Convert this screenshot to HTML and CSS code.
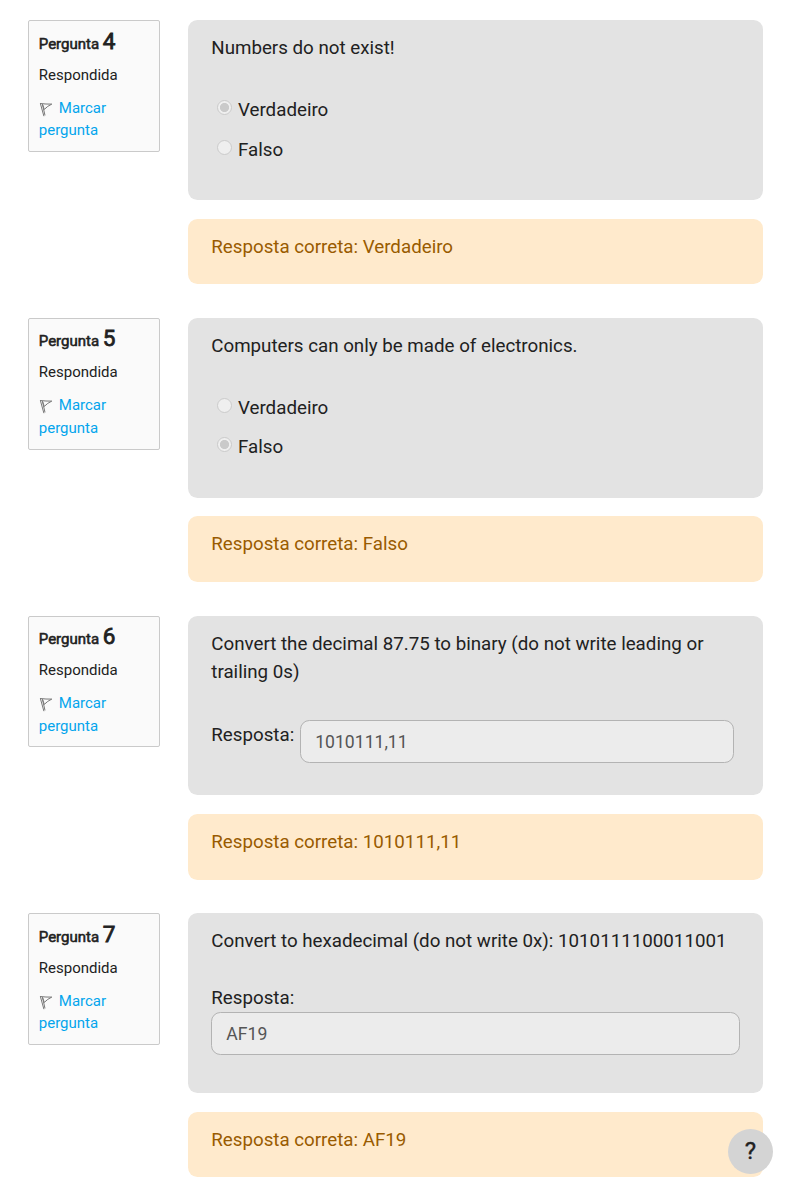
FILE: index.html
```html
<!DOCTYPE html>
<html lang="pt">
<head>
<meta charset="utf-8">
<title>Perguntas</title>
<link rel="stylesheet" href="styles.css">
</head>
<body>
<svg class="defs" aria-hidden="true">
  <symbol id="flag" viewBox="0 0 15 15"><path d="M1.4 1.6 4.9 14.2M3.4 2.2 6 13.4M1 1.5Q7 2.2 12.8 2.1Q8.5 4 5.3 7.4L3.5 2.3" fill="none" stroke="#777" stroke-width="1"/></symbol>
</svg>
<main class="quiz">
  <section class="question">
    <aside class="info">
      <h3 class="number">Pergunta <span class="digit">4</span></h3>
      <div class="state">Respondida</div>
      <a class="mark"><svg class="flag"><use href="#flag"/></svg>Marcar pergunta</a>
    </aside>
    <div class="content">
      <div class="formulation">
        <p class="text">Numbers do not exist!</p>
        <div class="options">
          <label class="option"><span class="radio checked"></span>Verdadeiro</label>
          <label class="option"><span class="radio"></span>Falso</label>
        </div>
      </div>
      <div class="outcome">Resposta correta: Verdadeiro</div>
    </div>
  </section>
  <section class="question">
    <aside class="info">
      <h3 class="number">Pergunta <span class="digit">5</span></h3>
      <div class="state">Respondida</div>
      <a class="mark"><svg class="flag"><use href="#flag"/></svg>Marcar pergunta</a>
    </aside>
    <div class="content">
      <div class="formulation">
        <p class="text">Computers can only be made of electronics.</p>
        <div class="options">
          <label class="option"><span class="radio"></span>Verdadeiro</label>
          <label class="option"><span class="radio checked"></span>Falso</label>
        </div>
      </div>
      <div class="outcome">Resposta correta: Falso</div>
    </div>
  </section>
  <section class="question">
    <aside class="info">
      <h3 class="number">Pergunta <span class="digit">6</span></h3>
      <div class="state">Respondida</div>
      <a class="mark"><svg class="flag"><use href="#flag"/></svg>Marcar pergunta</a>
    </aside>
    <div class="content">
      <div class="formulation">
        <p class="text">Convert the decimal 87.75 to binary (do not write leading or trailing 0s)</p>
        <div class="answer inline"><label>Resposta:</label><div class="field">1010111,11</div></div>
      </div>
      <div class="outcome">Resposta correta: 1010111,11</div>
    </div>
  </section>
  <section class="question">
    <aside class="info">
      <h3 class="number">Pergunta <span class="digit">7</span></h3>
      <div class="state">Respondida</div>
      <a class="mark"><svg class="flag"><use href="#flag"/></svg>Marcar pergunta</a>
    </aside>
    <div class="content">
      <div class="formulation">
        <p class="text">Convert to hexadecimal (do not write 0x): 1010111100011001</p>
        <div class="answer stacked"><label>Resposta:</label><div class="field">AF19</div></div>
      </div>
      <div class="outcome">Resposta correta: AF19</div>
    </div>
  </section>
</main>
<button class="help" type="button">?</button>
</body>
</html>
```
FILE: styles.css
```css
* { box-sizing: border-box; }
body {
  margin: 0;
  height: 1184px;
  overflow: hidden;
  background: #fff;
  color: #212121;
  font: 18.74px/28.1px Roboto, "Liberation Sans", sans-serif;
}
.defs { display: none; }
.quiz { padding: 20.2px 29px 0 28px; }
.question {
  display: flex;
  align-items: flex-start;
  gap: 28px;
  height: 297.7px;
}
.info {
  flex: none;
  width: 132px;
  height: 131.7px;
  padding: 8.6px 9.8px;
  border: 1px solid #cacaca;
  border-radius: 2px;
  background: #fafafa;
  font-size: 15px;
  line-height: 22.5px;
}
.number {
  margin: 0;
  font-size: 15px;
  font-weight: 400;
  line-height: 22.5px;
  -webkit-text-stroke: 0.55px #212121;
}
.digit { font-size: 22.5px; -webkit-text-stroke-width: 0.8px; }
.state { margin-top: 8.4px; }
.mark { display: block; margin-top: 10.5px; color: #03a5ed; }
.flag { width: 15px; height: 15px; margin-right: 5px; vertical-align: -4px; }
.content { flex: none; width: 575px; }
.formulation {
  height: 179.7px;
  padding: 14px 23.3px;
  border-radius: 9.4px;
  background: #e3e3e3;
}
.text { margin: 0; }
.options { display: flex; flex-direction: column; gap: 11.2px; padding: 34px 0 0 5.7px; }
.option { display: flex; align-items: flex-start; }
.radio {
  width: 15px;
  height: 15px;
  margin: 4px 6px 0 0;
  border: 1px solid #cbcbcb;
  border-radius: 50%;
  background: #efefef;
}
.checked { background: radial-gradient(circle, #cacaca 4.2px, #efefef 4.9px); }
.answer.inline { display: flex; gap: 6px; padding: 33.8px 6.1px 0 0; }
.inline .field { flex: 1; }
.inline label { padding-top: 1.7px; }
.answer.stacked { padding-top: 28.3px; }
.field {
  height: 43px;
  padding: 0 14px;
  border: 1px solid #b3b3b3;
  border-radius: 9.4px;
  background: #ececec;
  color: #555;
  font-size: 17.6px;
  line-height: 42px;
}
.outcome {
  height: 65.5px;
  margin-top: 18.8px;
  padding: 14.1px 23.3px;
  border-radius: 9.4px;
  background: #ffeacc;
  color: #995b00;
}
.help {
  position: fixed;
  left: 728px;
  top: 1129px;
  width: 45px;
  height: 45px;
  padding: 0;
  border: 0;
  border-radius: 50%;
  background: #d4d4d4;
  color: #212121;
  font: 400 24px/43px Roboto, sans-serif;
  -webkit-text-stroke: 0.4px #212121;
}
```
